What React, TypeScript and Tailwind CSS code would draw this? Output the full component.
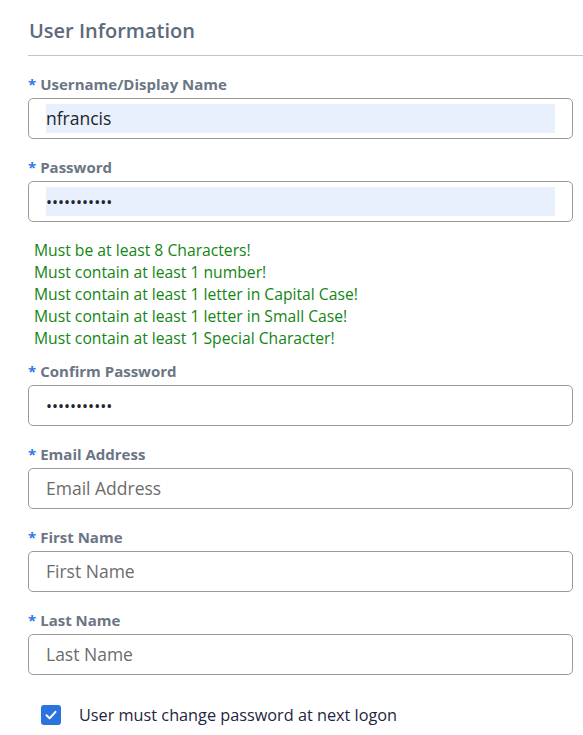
import React from "react";

function Label({ text }: { text: string }) {
  return (
    <div className="h-[20px] flex items-center text-[15px] font-bold leading-[20px] text-[#6b7585]">
      <span className="text-[#2f7ae5] mr-[4px]">*</span>
      <span>{text}</span>
    </div>
  );
}

function Field({
  label,
  value,
  placeholder,
  autofill,
  password,
}: {
  label: string;
  value?: string;
  placeholder?: string;
  autofill?: boolean;
  password?: boolean;
}) {
  return (
    <div className="flex flex-col">
      <Label text={label} />
      <div className="mt-[4px] h-[41px] rounded-[5px] border border-[#9a9a9a] bg-white px-[17px] py-[5px]">
        <div
          className={`h-full flex items-center ${autofill ? "bg-[#e8f0fe]" : ""}`}
        >
          {value !== undefined ? (
            <span
              className={`text-[#212529] ${password ? "text-[16px] tracking-[0px]" : "text-[17.5px]"}`}
            >
              {value}
            </span>
          ) : (
            <span className="text-[17.5px] text-[#6c6c6c]">{placeholder}</span>
          )}
        </div>
      </div>
    </div>
  );
}

export default function App() {
  const rules = [
    "Must be at least 8 Characters!",
    "Must contain at least 1 number!",
    "Must contain at least 1 letter in Capital Case!",
    "Must contain at least 1 letter in Small Case!",
    "Must contain at least 1 Special Character!",
  ];
  return (
    <div
      className="w-[583px] h-[735px] bg-white overflow-hidden"
      style={{ fontFamily: '"Open Sans", sans-serif' }}
    >
      <div className="pl-[28px] pr-[10px] pt-[16px]">
        <div className="h-[30px] flex items-center text-[20px] font-semibold text-[#5d6a7c] pl-[1px]">
          User Information
        </div>
        <div className="mt-[9px] h-px bg-[#c4c4c4] -mr-[10px]" />
        <div className="mt-[18px] flex flex-col">
          <Field label="Username/Display Name" value="nfrancis" autofill />
          <div className="mt-[18px]">
            <Field label="Password" value="•••••••••••" autofill password />
          </div>
          <div className="mt-[17px] pl-[6px] flex flex-col text-[15.7px] leading-[22px] text-[#138513]">
            {rules.map((r) => (
              <div key={r}>{r}</div>
            ))}
          </div>
          <div className="mt-[12px]">
            <Field label="Confirm Password" value="•••••••••••" password />
          </div>
          <div className="mt-[18px]">
            <Field label="Email Address" placeholder="Email Address" />
          </div>
          <div className="mt-[18px]">
            <Field label="First Name" placeholder="First Name" />
          </div>
          <div className="mt-[18px]">
            <Field label="Last Name" placeholder="Last Name" />
          </div>
          <div className="mt-[28px] pl-[13px] flex items-center">
            <div className="w-[20px] h-[20px] rounded-[3px] bg-[#2b74dd] flex items-center justify-center">
              <svg width="14" height="14" viewBox="0 0 14 14" fill="none">
                <path
                  d="M2.5 7.3 L5.6 10.3 L11.5 3.8"
                  stroke="white"
                  strokeWidth="2"
                  strokeLinecap="round"
                  strokeLinejoin="round"
                />
              </svg>
            </div>
            <span className="ml-[18px] text-[16.25px] text-[#1f2540]">
              User must change password at next logon
            </span>
          </div>
        </div>
      </div>
    </div>
  );
}
